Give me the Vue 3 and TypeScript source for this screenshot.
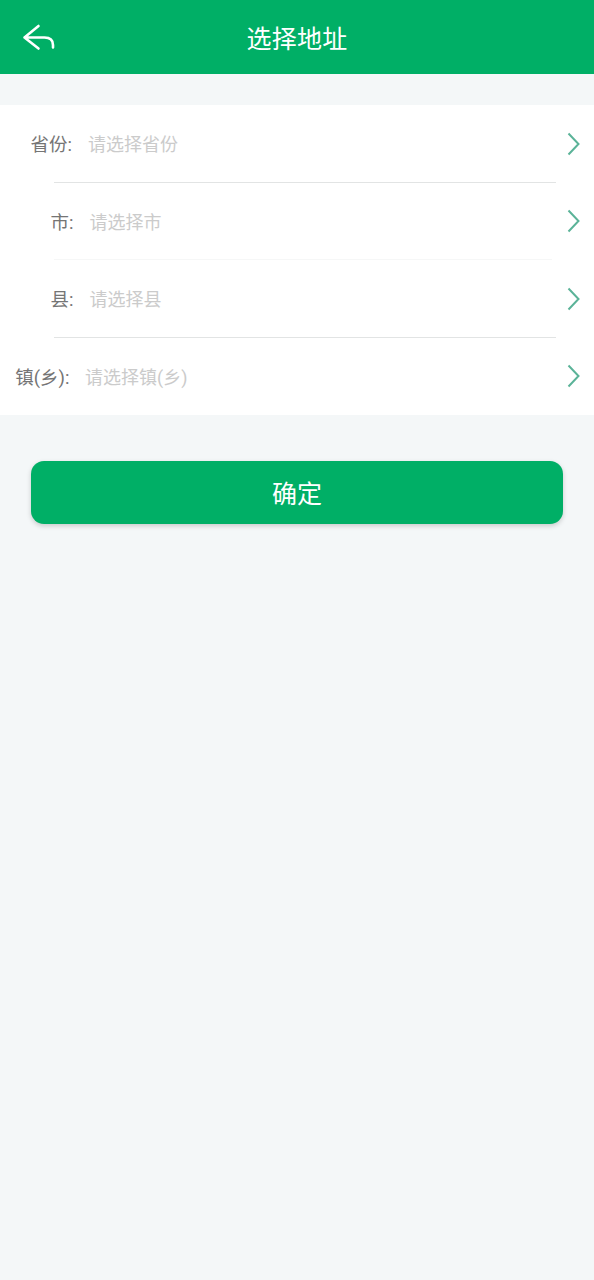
<template>
  <div class="page">
    <header class="top-bar">
      <svg class="back-icon" width="34" height="28" viewBox="0 0 34 28" fill="none">
        <path d="M16.5 3 L2.5 14.5 L16.5 25.5 M2.5 14.5 H22.5 Q31 14.5 31 22 V24.5" />
      </svg>
      <h1 class="title">选择地址</h1>
    </header>

    <div class="form-list">
      <div
        v-for="row in rows"
        :key="row.label"
        class="form-row"
        :class="row.cls"
      >
        <span class="row-label">{{ row.label }}:</span>
        <span class="row-value">{{ row.placeholder }}</span>
        <svg class="arrow" width="14" height="24" viewBox="0 0 14 24" fill="none">
          <path d="M2.5 1.5 L12.5 12 L2.5 22.5" />
        </svg>
      </div>
    </div>

    <button class="submit-btn" type="button">确定</button>
  </div>
</template>

<script setup lang="ts">
const rows = [
  { label: "省份", placeholder: "请选择省份", cls: "row-province" },
  { label: "市", placeholder: "请选择市", cls: "row-city" },
  { label: "县", placeholder: "请选择县", cls: "row-county" },
  { label: "镇(乡)", placeholder: "请选择镇(乡)", cls: "row-town" },
];
</script>

<style>
html,
body {
  margin: 0;
  background: #f4f7f8;
}
</style>

<style scoped>
.page {
  min-height: 1280px;
  background: #f4f7f8;
  font-family: "Roboto", "Noto Sans CJK SC", sans-serif;
  overflow: hidden;
}
.top-bar {
  height: 74px;
  background: #00af66;
  display: flex;
  align-items: center;
  justify-content: center;
  position: relative;
}
.back-icon {
  position: absolute;
  left: 22px;
  top: 23px;
}
.back-icon path {
  stroke: #fff;
  stroke-width: 2.6;
  stroke-linecap: round;
  stroke-linejoin: round;
}
.title {
  margin: 0;
  color: #fff;
  font-size: 25px;
  font-weight: 400;
  letter-spacing: 0.2px;
}
.form-list {
  margin-top: 31px;
  background: #fff;
}
.form-row {
  height: 77.5px;
  display: flex;
  align-items: center;
  position: relative;
  font-size: 18px;
}
.form-row::after {
  content: "";
  position: absolute;
  left: 54px;
  right: 38px;
  bottom: 0;
  height: 1px;
  background: #e2e4e4;
}
.row-city::after {
  background: #f6f7f7;
  right: 42px;
}
.row-town::after {
  display: none;
}
.row-label {
  color: #757575;
  text-align: right;
  flex: none;
  font-size: 18.5px;
}
.row-value {
  color: #cbcbcb;
  flex: 1;
}
.row-province .row-label,
.row-province .row-value,
.row-county .row-label,
.row-county .row-value {
  margin-top: -2px;
}
.row-province .row-label {
  width: 72px;
}
.row-province .row-value {
  margin-left: 16px;
}
.row-city .row-label,
.row-county .row-label {
  width: 73.5px;
}
.row-city .row-value,
.row-county .row-value {
  margin-left: 16px;
}
.row-town .row-label {
  width: 69.5px;
}
.row-town .row-value {
  margin-left: 15.5px;
}
.arrow {
  flex: none;
  margin-right: 14px;
}
.arrow path {
  stroke: #5bb398;
  stroke-width: 2;
}
.submit-btn {
  display: block;
  width: 532px;
  height: 63px;
  margin: 46px 0 0 31px;
  padding: 0 0 2px;
  border: none;
  border-radius: 13px;
  background: #00af66;
  color: #fff;
  font-family: inherit;
  font-size: 25px;
  box-shadow: 0 2px 5px rgba(0, 0, 0, 0.18);
}
</style>
